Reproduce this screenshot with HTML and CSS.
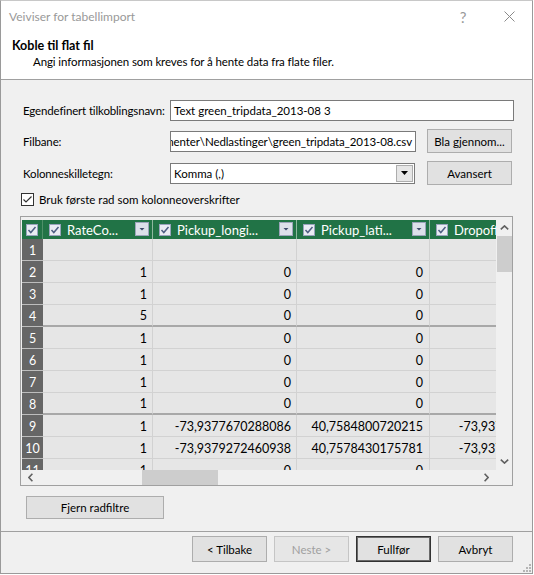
FILE: index.html
```html
<!DOCTYPE html>
<html lang="no">
<head>
    <meta charset="UTF-8">
    <title>Veiviser for tabellimport</title>
    <link rel="stylesheet" href="styles.css">
</head>
<body>
    <div class="window">
        <!-- Tittellinje -->
        <div class="titlebar">
            <span class="title">Veiviser for tabellimport</span>
            <span class="caption-btn help">?</span>
            <span class="caption-btn close">
                <svg width="11" height="11" viewBox="0 0 11 11"><path d="M0.5 0.5 L10.5 10.5 M10.5 0.5 L0.5 10.5" stroke="#8a8a8a" stroke-width="1"/></svg>
            </span>
        </div>

        <!-- Overskrift -->
        <div class="banner">
            <div class="banner-title">Koble til flat fil</div>
            <div class="banner-sub">Angi informasjonen som kreves for å hente data fra flate filer.</div>
        </div>

        <div class="content">
            <div class="form-row first">
                <label class="form-label">Egendefinert tilkoblingsnavn:</label>
                <div class="textbox wide">Text green_tripdata_2013-08 3</div>
            </div>
            <div class="form-row">
                <label class="form-label">Filbane:</label>
                <div class="textbox path"><span>kumenter\Nedlastinger\green_tripdata_2013-08.csv</span></div>
                <button class="btn side-btn">Bla gjennom...</button>
            </div>
            <div class="form-row">
                <label class="form-label">Kolonneskilletegn:</label>
                <div class="combo">
                    <span class="combo-text">Komma (,)</span>
                    <span class="combo-arrow"><svg width="7" height="4" viewBox="0 0 7 4"><path d="M0 0 H7 L3.5 4 Z" fill="#000"/></svg></span>
                </div>
                <button class="btn side-btn">Avansert</button>
            </div>
            <div class="check-row">
                <svg class="winbox" width="13" height="13" viewBox="0 0 13 13"><rect x="0.5" y="0.5" width="12" height="12" fill="#fff" stroke="#333"/><path d="M2.5 6.5 L5 9 L10.5 3.5" fill="none" stroke="#333" stroke-width="1.2"/></svg>
                <span>Bruk første rad som kolonneoverskrifter</span>
            </div>

            <!-- Forhåndsvisning -->
            <div class="grid-box">
                <div class="grid-view">
                    <div class="grid">
                        <div class="grid-row head">
                            <div class="rownum"><svg class="hcb" width="12" height="12" viewBox="0 0 12 12"><rect x="0.5" y="0.5" width="11" height="11" fill="#e9ecf3" stroke="#98a3bc"/><path d="M2.5 6 L4.8 8.5 L9.5 3" fill="none" stroke="#4d5e83" stroke-width="1.5"/></svg></div>
                            <div class="cell c1">
                                <svg class="hcb" width="12" height="12" viewBox="0 0 12 12"><rect x="0.5" y="0.5" width="11" height="11" fill="#e9ecf3" stroke="#98a3bc"/><path d="M2.5 6 L4.8 8.5 L9.5 3" fill="none" stroke="#4d5e83" stroke-width="1.5"/></svg>
                                <span class="col-name">RateCo...</span>
                                <svg class="dd" width="14" height="14" viewBox="0 0 14 14"><rect x="0.5" y="0.5" width="13" height="13" fill="#dce0ea" stroke="#9ca4ba"/><path d="M4.5 6 H9.5 L7 8.5 Z" fill="#3e4a6a"/></svg>
                            </div>
                            <div class="cell c2">
                                <svg class="hcb" width="12" height="12" viewBox="0 0 12 12"><rect x="0.5" y="0.5" width="11" height="11" fill="#e9ecf3" stroke="#98a3bc"/><path d="M2.5 6 L4.8 8.5 L9.5 3" fill="none" stroke="#4d5e83" stroke-width="1.5"/></svg>
                                <span class="col-name">Pickup_longi...</span>
                                <svg class="dd" width="14" height="14" viewBox="0 0 14 14"><rect x="0.5" y="0.5" width="13" height="13" fill="#dce0ea" stroke="#9ca4ba"/><path d="M4.5 6 H9.5 L7 8.5 Z" fill="#3e4a6a"/></svg>
                            </div>
                            <div class="cell c3">
                                <svg class="hcb" width="12" height="12" viewBox="0 0 12 12"><rect x="0.5" y="0.5" width="11" height="11" fill="#e9ecf3" stroke="#98a3bc"/><path d="M2.5 6 L4.8 8.5 L9.5 3" fill="none" stroke="#4d5e83" stroke-width="1.5"/></svg>
                                <span class="col-name">Pickup_lati...</span>
                                <svg class="dd" width="14" height="14" viewBox="0 0 14 14"><rect x="0.5" y="0.5" width="13" height="13" fill="#dce0ea" stroke="#9ca4ba"/><path d="M4.5 6 H9.5 L7 8.5 Z" fill="#3e4a6a"/></svg>
                            </div>
                            <div class="cell c4">
                                <svg class="hcb" width="12" height="12" viewBox="0 0 12 12"><rect x="0.5" y="0.5" width="11" height="11" fill="#e9ecf3" stroke="#98a3bc"/><path d="M2.5 6 L4.8 8.5 L9.5 3" fill="none" stroke="#4d5e83" stroke-width="1.5"/></svg>
                                <span class="col-name">Dropoff_longi...</span>
                            </div>
                        </div>
                        <div class="grid-row"><div class="rownum">1</div><div class="cell c1"></div><div class="cell c2"></div><div class="cell c3"></div><div class="cell c4"></div></div>
                        <div class="grid-row"><div class="rownum">2</div><div class="cell c1">1</div><div class="cell c2">0</div><div class="cell c3">0</div><div class="cell c4"></div></div>
                        <div class="grid-row"><div class="rownum">3</div><div class="cell c1">1</div><div class="cell c2">0</div><div class="cell c3">0</div><div class="cell c4"></div></div>
                        <div class="grid-row split"><div class="rownum">4</div><div class="cell c1">5</div><div class="cell c2">0</div><div class="cell c3">0</div><div class="cell c4"></div></div>
                        <div class="grid-row"><div class="rownum">5</div><div class="cell c1">1</div><div class="cell c2">0</div><div class="cell c3">0</div><div class="cell c4"></div></div>
                        <div class="grid-row"><div class="rownum">6</div><div class="cell c1">1</div><div class="cell c2">0</div><div class="cell c3">0</div><div class="cell c4"></div></div>
                        <div class="grid-row"><div class="rownum">7</div><div class="cell c1">1</div><div class="cell c2">0</div><div class="cell c3">0</div><div class="cell c4"></div></div>
                        <div class="grid-row split"><div class="rownum">8</div><div class="cell c1">1</div><div class="cell c2">0</div><div class="cell c3">0</div><div class="cell c4"></div></div>
                        <div class="grid-row"><div class="rownum">9</div><div class="cell c1">1</div><div class="cell c2">-73,9377670288086</div><div class="cell c3">40,7584800720215</div><div class="cell c4">-73,9377670288086</div></div>
                        <div class="grid-row"><div class="rownum">10</div><div class="cell c1">1</div><div class="cell c2">-73,9379272460938</div><div class="cell c3">40,7578430175781</div><div class="cell c4">-73,9379272460938</div></div>
                        <div class="grid-row"><div class="rownum">11</div><div class="cell c1">1</div><div class="cell c2">0</div><div class="cell c3">0</div><div class="cell c4"></div></div>
                    </div>
                </div>
                <div class="vscroll">
                    <svg class="arrow-up" width="9" height="5" viewBox="0 0 9 5"><path d="M0.8 4.4 L4.5 0.9 L8.2 4.4" fill="none" stroke="#606060" stroke-width="1.6"/></svg>
                    <div class="vthumb"></div>
                    <svg class="arrow-down" width="9" height="5" viewBox="0 0 9 5"><path d="M0.8 0.6 L4.5 4.1 L8.2 0.6" fill="none" stroke="#606060" stroke-width="1.6"/></svg>
                </div>
                <div class="hscroll">
                    <svg class="arrow-left" width="5" height="9" viewBox="0 0 5 9"><path d="M4.4 0.8 L0.9 4.5 L4.4 8.2" fill="none" stroke="#606060" stroke-width="1.6"/></svg>
                    <div class="hthumb"></div>
                    <svg class="arrow-right" width="5" height="9" viewBox="0 0 5 9"><path d="M0.6 0.8 L4.1 4.5 L0.6 8.2" fill="none" stroke="#606060" stroke-width="1.6"/></svg>
                </div>
                <div class="corner"></div>
            </div>

            <button class="btn filter-btn">Fjern radfiltre</button>
        </div>

        <!-- Knapper -->
        <div class="footer">
            <button class="btn nav-btn">&lt; Tilbake</button>
            <button class="btn nav-btn disabled">Neste &gt;</button>
            <button class="btn nav-btn default">Fullfør</button>
            <button class="btn nav-btn">Avbryt</button>
            <svg class="grip" width="9" height="9" viewBox="0 0 9 9">
                <rect x="7" y="1" width="2" height="2" fill="#b5b5b5"/>
                <rect x="4" y="4" width="2" height="2" fill="#b5b5b5"/>
                <rect x="7" y="4" width="2" height="2" fill="#b5b5b5"/>
                <rect x="1" y="7" width="2" height="2" fill="#b5b5b5"/>
                <rect x="4" y="7" width="2" height="2" fill="#b5b5b5"/>
                <rect x="7" y="7" width="2" height="2" fill="#b5b5b5"/>
            </svg>
        </div>
    </div>
</body>
</html>
```

FILE: styles.css
```css
/* Globalt */
body {
    margin: 0;
    background-color: #fff;
    font-family: "Lato", "Liberation Sans", sans-serif;
    font-size: 11.5px;
    color: #000;
}
.window {
    box-sizing: border-box;
    width: 533px;
    height: 574px;
    border: 1px solid #9a9a9a;
    border-top-color: #c8c8c8;
    background-color: #f0f0f0;
    display: flex;
    flex-direction: column;
    position: relative;
}

/* Tittellinje */
.titlebar {
    height: 31px;
    background-color: #fff;
    display: flex;
    align-items: center;
    padding-left: 8px;
    color: #999;
    font-size: 12px;
}
.title {
    flex-grow: 1;
}
.caption-btn {
    width: 46px;
    height: 31px;
    display: flex;
    align-items: center;
    justify-content: center;
}
.help {
    font-size: 15px;
    color: #999;
}

/* Overskrift */
.banner {
    box-sizing: border-box;
    height: 48px;
    background-color: #fff;
    border-bottom: 1px solid #a0a0a0;
    padding: 6px 0 0 11px;
    line-height: 16px;
}
.banner-title {
    font-weight: bold;
    font-size: 12.5px;
}
.banner-sub {
    margin-left: 21px;
    letter-spacing: -0.1px;
}

/* Skjema */
.content {
    padding: 20px 0 0 19px;
}
.form-row {
    display: flex;
    align-items: center;
    height: 24px;
    margin-top: 8px;
}
.form-row.first {
    height: 21px;
    margin-top: 0;
}
.form-label {
    box-sizing: border-box;
    width: 150px;
    padding-left: 3px;
    white-space: nowrap;
    letter-spacing: -0.15px;
}
.textbox {
    box-sizing: border-box;
    height: 21px;
    background-color: #fff;
    border: 1px solid #7a7a7a;
    padding: 0 3px;
    line-height: 19px;
    white-space: nowrap;
    overflow: hidden;
}
.textbox.wide {
    width: 344px;
}
.textbox.path {
    width: 246px;
    display: flex;
    justify-content: flex-end;
    letter-spacing: -0.1px;
}
.combo {
    box-sizing: border-box;
    width: 245px;
    height: 21px;
    background-color: #fff;
    border: 1px solid #7a7a7a;
    display: flex;
    align-items: center;
    padding: 1px;
}
.combo-text {
    flex-grow: 1;
    padding-left: 2px;
}
.combo-arrow {
    box-sizing: border-box;
    width: 17px;
    height: 17px;
    background-color: #e6e6e6;
    border: 1px solid #adadad;
    display: flex;
    align-items: center;
    justify-content: center;
}
.btn {
    box-sizing: border-box;
    font-family: inherit;
    font-size: 11.5px;
    color: #000;
    background-color: #e1e1e1;
    border: 1px solid #adadad;
    padding: 0;
}
.side-btn {
    width: 85px;
    height: 24px;
    margin-left: auto;
    margin-right: 20px;
}
.check-row {
    display: flex;
    align-items: center;
    height: 15px;
    margin-top: 7px;
    gap: 5px;
    padding-left: 1px;
}

/* Rutenett */
.grid-box {
    box-sizing: border-box;
    width: 493px;
    height: 270px;
    margin-top: 9px;
    border: 1px solid #a0a0a0;
    padding: 3px 0 0 1px;
    display: grid;
    grid-template-columns: 474px 16px;
    grid-template-rows: 250px 15px;
    background-color: #f0f0f0;
}
.grid-view {
    overflow: hidden;
    background-color: #f0f0f0;
}
.grid {
    width: 560px;
    font-size: 12.5px;
}
.grid-row {
    display: flex;
    height: 22px;
}
.grid-row.head {
    height: 19px;
    background-color: #217346;
    color: #fff;
}
.rownum {
    box-sizing: border-box;
    width: 21px;
    flex-shrink: 0;
    background-color: #666;
    color: #fff;
    border-bottom: 1px solid #bdbdbd;
    display: flex;
    align-items: center;
    justify-content: center;
    padding-top: 1px;
}
.head .rownum {
    background-color: #217346;
    border-bottom: none;
    border-right: 1px solid #4f9069;
    padding-top: 0;
}
.cell {
    box-sizing: border-box;
    flex-shrink: 0;
    background-color: #e6e6e6;
    border-right: 1px solid #d2d2d2;
    border-bottom: 1px solid #d2d2d2;
    display: flex;
    align-items: center;
    justify-content: flex-end;
    padding: 1px 5px 0 0;
    white-space: nowrap;
    overflow: hidden;
}
.split .cell {
    border-bottom: 2px solid #a8a8a8;
}
.head .cell {
    background-color: #217346;
    border-bottom: none;
    border-right: 1px solid #8fb8a0;
    justify-content: flex-start;
    padding: 0 3px 0 6px;
}
.c1 { width: 110px; }
.c2 { width: 144px; }
.c3 { width: 133px; padding-right: 6px; }
.c4 { width: 152px; padding-right: 6px; }
.col-name {
    flex-grow: 1;
    margin-left: 6px;
    font-size: 13px;
}
.hcb {
    flex-shrink: 0;
}
.dd {
    flex-shrink: 0;
    margin-top: -1px;
}

/* Rullefelt */
.vscroll {
    background-color: #f0f0f0;
    display: flex;
    flex-direction: column;
    align-items: center;
}
.arrow-up {
    margin-top: 5px;
}
.vthumb {
    width: 15px;
    height: 36px;
    margin-top: 6px;
    background-color: #cdcdcd;
}
.arrow-down {
    margin-top: auto;
    margin-bottom: 6px;
}
.hscroll {
    background-color: #f0f0f0;
    display: flex;
    align-items: center;
}
.arrow-left {
    margin-left: 6px;
}
.hthumb {
    width: 76px;
    height: 15px;
    margin-left: 109px;
    background-color: #cdcdcd;
}
.arrow-right {
    margin-left: auto;
    margin-right: 7px;
}
.corner {
    background-color: #f0f0f0;
}

.filter-btn {
    display: block;
    width: 138px;
    height: 23px;
    margin: 10px 0 0 6px;
}

/* Bunnknapper */
.footer {
    margin-top: auto;
    height: 42px;
    box-sizing: border-box;
    border-top: 1px solid #a0a0a0;
    display: flex;
    align-items: flex-start;
    justify-content: flex-end;
    gap: 7px;
    padding: 4px 19px 0 0;
    position: relative;
}
.nav-btn {
    width: 75px;
    height: 26px;
}
.nav-btn.disabled {
    color: #a0a0a0;
    border-color: #c5c5c5;
    background-color: #e6e6e6;
}
.nav-btn.default {
    border: 1px solid #333;
    box-shadow: inset 0 0 0 1px #6a6a6a;
}
.grip {
    position: absolute;
    right: 1px;
    bottom: 1px;
}
```
